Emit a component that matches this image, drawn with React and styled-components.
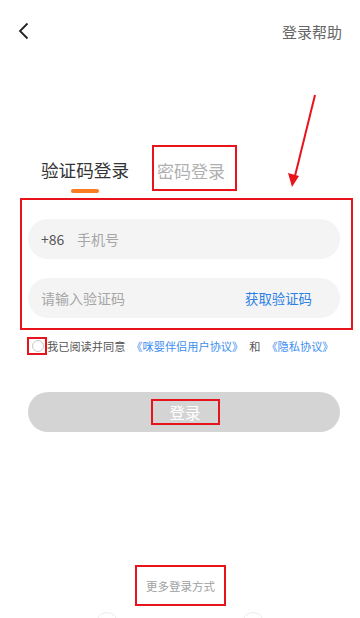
import React from 'react';
import styled, { createGlobalStyle } from 'styled-components';

const GlobalStyle = createGlobalStyle`
  html, body {
    margin: 0;
    padding: 0;
    background: #ffffff;
  }
  * {
    box-sizing: border-box;
  }
`;

const annotation = '#e8141c';

const Page = styled.div`
  position: relative;
  width: 360px;
  height: 618px;
  overflow: hidden;
  background: #ffffff;
  font-family: 'Noto Sans CJK SC', 'Noto Sans', sans-serif;
  display: flex;
  flex-direction: column;
`;

const Header = styled.div`
  height: 60px;
  display: flex;
  align-items: center;
  justify-content: space-between;
  padding: 0 18px 0 17px;
`;

const BackButton = styled.button`
  border: none;
  background: none;
  padding: 0;
  width: 16px;
  height: 20px;
  display: flex;
  align-items: center;
  margin-top: 2px;
`;

const HelpLink = styled.span`
  font-size: 15px;
  color: #666666;
  margin-top: 2px;
`;

const Tabs = styled.div`
  display: flex;
  align-items: flex-start;
  padding-left: 41px;
  margin-top: 85px;
  height: 53px;
`;

const Tab = styled.div`
  display: flex;
  flex-direction: column;
  align-items: center;
  padding-top: 13px;
`;

const TabLabel = styled.span`
  font-size: ${p => (p.$active ? '17.6px' : '17px')};
  line-height: 24px;
  color: ${p => (p.$active ? '#333333' : '#b0b0b0')};
`;

const TabBar = styled.div`
  width: 28px;
  height: 4px;
  border-radius: 2px;
  background: #fa7d24;
  margin-top: 7px;
`;

const MarkedTab = styled.div`
  width: 85px;
  height: 46px;
  margin-left: 23px;
  border: 2px solid ${annotation};
  padding: 12px 0 0 3px;
`;

const FormBox = styled.div`
  margin: 0 7px 0 20px;
  height: 132px;
  border: 2px solid ${annotation};
  padding: 19px 11px 0 6px;
  display: flex;
  flex-direction: column;
  gap: 19px;
`;

const Field = styled.div`
  height: 40px;
  border-radius: 20px;
  background: #f4f4f4;
  display: flex;
  align-items: center;
  padding: 0 28px 0 13px;
  font-size: 14px;
`;

const Prefix = styled.span`
  color: #555555;
  width: 36px;
`;

const Placeholder = styled.span`
  color: #a6a6a6;
  flex: 1;
`;

const CodeLink = styled.span`
  color: #2b7fe6;
  font-size: 13.4px;
`;

const Agreement = styled.div`
  display: flex;
  align-items: center;
  padding-left: 27px;
  margin-top: 7px;
  height: 18px;
  font-size: 11.2px;
  color: #555555;
  white-space: nowrap;
`;

const CheckMark = styled.div`
  width: 20px;
  height: 18px;
  border: 2px solid ${annotation};
  display: flex;
  align-items: center;
  justify-content: center;
  padding-left: 1px;
`;

const Circle = styled.div`
  width: 12px;
  height: 12px;
  border-radius: 50%;
  border: 1px solid #c8c8c8;
`;

const Text = styled.span`
  color: ${p => (p.$link ? '#3d8ef0' : '#555555')};
  margin-left: ${p => p.$gap || 0}px;
`;

const LoginButton = styled.div`
  margin: 37px 20px 0 28px;
  height: 40px;
  border-radius: 20px;
  background: #d4d4d4;
  display: flex;
  align-items: center;
  justify-content: center;
`;

const LoginLabel = styled.div`
  width: 69px;
  height: 26px;
  border: 2px solid ${annotation};
  display: flex;
  align-items: center;
  justify-content: center;
  color: #ffffff;
  font-size: 15.5px;
  margin-left: 2px;
`;

const Spacer = styled.div`
  flex: 1;
`;

const MoreBox = styled.div`
  align-self: center;
  width: 91px;
  height: 41px;
  margin: 0 0 12px 1px;
  border: 2px solid ${annotation};
  display: flex;
  align-items: center;
  justify-content: center;
  font-size: 11.5px;
  color: #9f9f9f;
`;

const OtherLogins = styled.div`
  position: absolute;
  left: 0;
  right: 0;
  top: 612px;
  display: flex;
  justify-content: center;
  gap: 124px;
`;

const OtherIcon = styled.div`
  width: 22px;
  height: 22px;
  border-radius: 50%;
  border: 1px solid #ececec;
`;

const Arrow = styled.svg`
  position: absolute;
  left: 284px;
  top: 90px;
  pointer-events: none;
`;

export default function App() {
  return (
    <>
      <GlobalStyle />
      <Page>
        <Header>
          <BackButton aria-label="back">
            <svg width="12" height="18" viewBox="0 0 12 18">
              <path d="M10.5 1.5 L3 9 L10.5 16.5" fill="none" stroke="#222" strokeWidth="1.8" />
            </svg>
          </BackButton>
          <HelpLink>登录帮助</HelpLink>
        </Header>

        <Tabs>
          <Tab>
            <TabLabel $active>验证码登录</TabLabel>
            <TabBar />
          </Tab>
          <MarkedTab>
            <TabLabel>密码登录</TabLabel>
          </MarkedTab>
        </Tabs>

        <FormBox>
          <Field>
            <Prefix>+86</Prefix>
            <Placeholder>手机号</Placeholder>
          </Field>
          <Field>
            <Placeholder>请输入验证码</Placeholder>
            <CodeLink>获取验证码</CodeLink>
          </Field>
        </FormBox>

        <Agreement>
          <CheckMark>
            <Circle />
          </CheckMark>
          <Text>我已阅读并同意</Text>
          <Text $link $gap={6}>《咪婴伴侣用户协议》</Text>
          <Text $gap={6}>和</Text>
          <Text $link $gap={6}>《隐私协议》</Text>
        </Agreement>

        <LoginButton>
          <LoginLabel>登录</LoginLabel>
        </LoginButton>

        <Spacer />
        <MoreBox>更多登录方式</MoreBox>

        <OtherLogins>
          <OtherIcon />
          <OtherIcon />
        </OtherLogins>

        <Arrow width="40" height="102" viewBox="0 0 40 102">
          <line x1="31" y1="5" x2="11" y2="86" stroke={annotation} strokeWidth="2" />
          <polygon points="8,97 4,83 15,86" fill={annotation} />
        </Arrow>
      </Page>
    </>
  );
}
